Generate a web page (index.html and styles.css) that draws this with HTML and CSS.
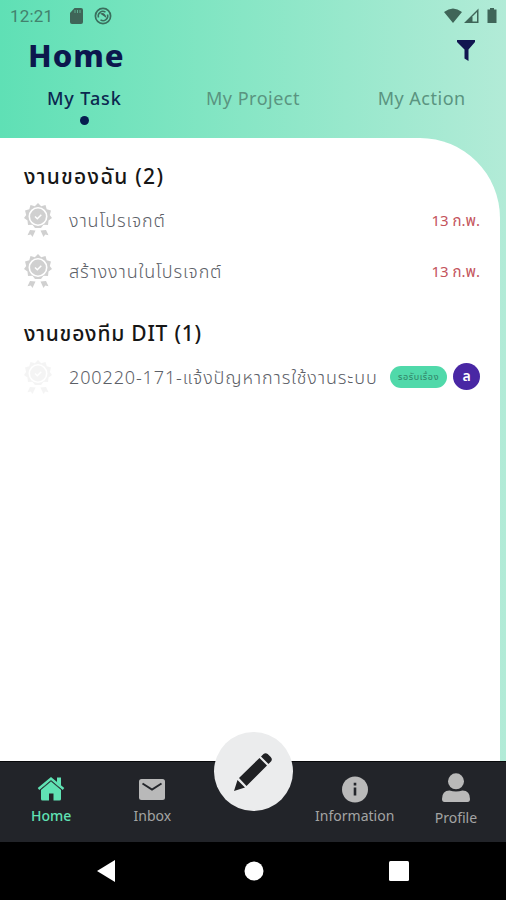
FILE: index.html
```html
<!DOCTYPE html>
<html lang="th">
<head>
<meta charset="utf-8">
<title>Home</title>
<link rel="stylesheet" href="styles.css">
</head>
<body>
<svg class="defs" width="0" height="0">
  <symbol id="badge" viewBox="0 0 28 36">
    <path d="M14 1l3.200 3.200L21.500 3l1.200 4.300L27 8.500 25.800 13l2.200 3-3.500 2.500-.5 4.500-4.500-.2L17 26h-6l-2.500-3.200L4 23l-.5-4.500L0 16l2.200-3L1 8.500l4.300-1.200L6.500 3l4.300 1.200z"/>
    <circle cx="14" cy="14.500" r="8.700" fill="none" stroke="#fff" stroke-width="1.600"/>
    <circle cx="14" cy="14.500" r="5.800"/>
    <path d="M11 14.500l2.300 2.300 4-4" fill="none" stroke="#fff" stroke-width="1.500"/>
    <path d="M6 28l5.500.5L8.500 35l-1.700-2.500-3.300.8zM22 28l-5.500.5 3 6.500 1.700-2.500 3.300.8z"/>
  </symbol>
</svg>
<div class="app">
  <header class="header">
    <div class="status">
      <span class="clock">12:21</span>
      <svg class="sd" width="13" height="16" viewBox="0 0 13 16"><path d="M4.500 0H11q2 0 2 2v12q0 2-2 2H2q-2 0-2-2V5z"/><path d="M5 2v3M7.500 2v3M10 2v3" stroke="#74dcb7" stroke-width=".6"/></svg>
      <svg class="sync" width="18" height="18" viewBox="0 0 18 18"><circle cx="9" cy="9" r="7.600" fill="none" stroke="#3a6e5d" stroke-width="1.700"/><path d="M4.500 10.500A4.600 4.600 0 0 1 11.500 5.200M13.500 7.500a4.600 4.600 0 0 1-7 5.300" fill="none" stroke="#3a6e5d" stroke-width="1.500"/><path d="M6 6.500q5-2 6.500 4.500z"/></svg>
      <span class="spacer"></span>
      <svg width="54" height="16" viewBox="0 0 54 16"><path d="M0 4Q9 -3 18 4L9 15zM20 15L34.500.500V15z"/><path d="M28.500 8.500l4.500-4.500v9.500h-4.500z" fill="#abe9d2"/><path d="M46 0h4v1.500h2.500V15H43.500V1.500H46z"/></svg>
    </div>
    <div class="title-row">
      <h1>Home</h1>
      <svg width="18" height="21" viewBox="0 0 18 21"><path d="M0 0h18v2l-6.500 7.500V21L7.500 18.500V9.500L0 2z" fill="#111650"/></svg>
    </div>
    <nav class="tabs">
      <a class="tab active"><span>My Task</span></a>
      <a class="tab"><span>My Project</span></a>
      <a class="tab"><span>My Action</span></a>
    </nav>
  </header>
  <main class="panel">
    <h2 class="mine">งานของฉัน (2)</h2>
    <div class="row"><svg class="badge"><use href="#badge"/></svg><span class="name n1">งานโปรเจกต์</span><time>13 ก.พ.</time></div>
    <div class="row"><svg class="badge"><use href="#badge"/></svg><span class="name n2">สร้างงานในโปรเจกต์</span><time>13 ก.พ.</time></div>
    <h2 class="team">งานของทีม DIT (1)</h2>
    <div class="row"><svg class="badge faint"><use href="#badge"/></svg><span class="name n3">200220-171-แจ้งปัญหาการใช้งานระบบ</span><span class="pill">รอรับเรื่อง</span><span class="avatar">ล</span></div>
  </main>
  <nav class="bottom">
    <a class="item on"><svg width="28" height="28" viewBox="0 0 28 28"><path d="M14 6l10 8.500V24q0 1.500-1.500 1.500H16.500v-7h-4.500v7H5.500Q4 25.500 4 24V14.500z"/><path d="M1.500 14L14 3.500 26.500 14" fill="none" stroke="#60e2b4" stroke-width="2.400"/><path d="M20 2.500h4V11l-4-3.500z"/><path d="M3 15.500L14 6.200l11 9.300" fill="none" stroke="#24262b" stroke-width=".6"/></svg><span>Home</span></a>
    <a class="item"><svg width="28" height="28" viewBox="0 0 28 28"><rect x="1" y="4" width="26" height="21" rx="2.500"/><path d="M4.500 8.500L14 14.500l9.500-6" fill="none" stroke="#24262b" stroke-width="2"/></svg><span>Inbox</span></a>
    <div class="item"><button class="compose" aria-label="Compose"><svg width="38" height="38" viewBox="0 0 38 38"><path d="M0 38l3.500-11 7.500 7.500zM5 25L25.500 5l7.500 7.500L12.500 33zM27 3.500L29.500 1q2-1.500 4.200 0l3 3q2 2 .5 4.200L34.500 11z" fill="#202124"/></svg></button></div>
    <a class="item info"><svg width="28" height="28" viewBox="0 0 28 28"><circle cx="14" cy="14.500" r="13"/><path d="M14 12.500v8M14 7.800v2.800" fill="none" stroke="#24262b" stroke-width="2.600"/></svg><span>Information</span></a>
    <a class="item profile"><svg width="30" height="30" viewBox="0 0 30 30"><circle cx="15" cy="8.300" r="8"/><path d="M1 26q0-8.500 7.500-8.500 6.500 2 13 0Q29 17.500 29 26q0 3-2.500 3h-23Q1 29 1 26z"/></svg><span>Profile</span></a>
  </nav>
  <footer class="system">
    <svg width="18" height="22" viewBox="0 0 18 22"><path d="M18 0v22L0 11z"/></svg>
    <svg class="home-key" width="20" height="20" viewBox="0 0 20 20"><circle cx="10" cy="10" r="9.500"/></svg>
    <svg width="20" height="20" viewBox="0 0 20 20"><rect width="20" height="20" rx="1.500"/></svg>
  </footer>
</div>
</body>
</html>
```
FILE: styles.css
```css
* { box-sizing: border-box; }
body { margin: 0; font-family: "Noto Sans", "Noto Sans Thai", sans-serif; }
h1, h2 { margin: 0; white-space: nowrap; }
.defs { display: block; height: 0; }
.app { width: 506px; height: 900px; display: flex; flex-direction: column; overflow: hidden; background: linear-gradient(90deg, #5fe0b5 0%, #87e6c5 48%, #b2ebd7 100%); }
.header { height: 138px; flex: none; }
.status { height: 32px; display: flex; align-items: center; padding: 0 8px 0 10px; fill: #3f6558; }
.clock { width: 60px; font: 17px Roboto, sans-serif; color: #42826d; letter-spacing: .2px; }
.sync { margin-left: 11px; }
.spacer { flex: 1; }
.title-row { height: 46px; display: flex; justify-content: space-between; padding: 8px 31px 0 28px; }
h1 { font: 800 31px/30px "Noto Sans", sans-serif; color: #0c174d; letter-spacing: 1px; }
.tabs { display: grid; grid-template-columns: repeat(3, 1fr); padding-top: 8px; }
.tab { display: flex; flex-direction: column; align-items: center; font-size: 18px; line-height: 24px; color: #5a9480; letter-spacing: .5px; white-space: nowrap; }
.tab.active { color: #0b2850; font-weight: 500; letter-spacing: .9px; }
.tab.active::after { content: ""; width: 9px; height: 9px; margin-top: 6px; border-radius: 50%; background: #071d50; }
.panel { width: 500px; height: 623px; background: #fff; border-top-right-radius: 80px; padding: 20px 20px 0 24px; }
h2 { font-size: 21px; font-weight: 500; line-height: 36px; color: #161616; letter-spacing: 1.25px; }
.row { height: 51px; display: flex; align-items: center; }
.team { margin-top: 19px; letter-spacing: .78px; }
.badge { width: 28px; height: 36px; margin-right: 17px; fill: #d0d0d0; flex: none; }
.faint { opacity: .22; }
.name { font-size: 18px; line-height: 28px; font-weight: 300; color: #5c6067; white-space: nowrap; letter-spacing: .85px; }
.n3 { letter-spacing: .88px; }
time { margin: 3px 0 0 auto; font-size: 15px; color: #c4545c; white-space: nowrap; }
.pill { margin-left: auto; width: 57px; height: 22px; border-radius: 11px; background: #50d9aa; color: #308166; font-size: 9px; line-height: 21px; letter-spacing: .6px; text-align: center; white-space: nowrap; flex: none; }
.avatar { width: 27px; height: 27px; border-radius: 50%; margin-left: 6px; background: #4927a4; color: #fff; font-size: 14px; line-height: 25px; text-align: center; font-weight: 600; flex: none; }
.bottom { height: 81px; flex: none; display: grid; grid-template-columns: repeat(5, 1fr); background: #222429; border-top: 1px solid #08090b; }
.item { position: relative; display: flex; flex-direction: column; align-items: center; padding: 13px 0 0 1px; color: #a4a4a4; fill: #b9b9b9; font-size: 14px; line-height: 20px; }
.item span { margin-top: 3px; }
.on { color: #60e2b4; fill: #60e2b4; font-weight: 500; }
.profile { padding-top: 11px; }
.profile span { margin-top: 5px; }
.compose { position: absolute; top: -30px; width: 79px; height: 79px; border: 0; border-radius: 50%; background: #ebeced; display: flex; align-items: center; justify-content: center; padding: 0; }
.system { height: 58px; flex: none; background: #000; fill: #fff; display: flex; align-items: center; justify-content: space-between; padding: 0 97px; }
.home-key { margin-left: 3px; }
```
